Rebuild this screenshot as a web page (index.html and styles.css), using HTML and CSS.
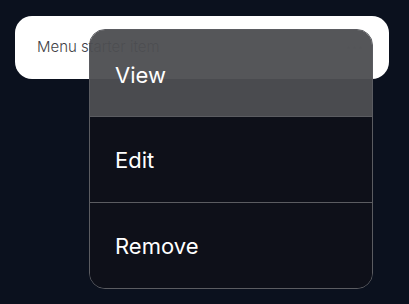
FILE: index.html
```html
<!DOCTYPE html>
<html lang="en">
<head>
    <meta charset="UTF-8">
    <meta name="viewport" content="width=device-width, initial-scale=1.0">
    <title>Menu</title>
    <link rel="stylesheet" href="styles.css">
</head>
<body>
    <div class="page">
        <div class="card">
            <span class="card-label">Menu starter item</span>
            <span class="dots">
                <i></i><i></i><i></i>
            </span>
        </div>

        <ul class="menu">
            <li class="menu-item active">View</li>
            <li class="menu-item">Edit</li>
            <li class="menu-item">Remove</li>
        </ul>
    </div>
</body>
</html>
```

FILE: styles.css
```css
* {
    margin: 0;
    padding: 0;
    box-sizing: border-box;
}

body {
    font-family: 'Inter', 'Noto Sans', sans-serif;
    background: #0b111e;
    min-height: 100vh;
}

.page {
    position: relative;
    padding: 16px 20px 0 15px;
}

.card {
    height: 63px;
    background: #ffffff;
    border-radius: 17px;
    display: flex;
    align-items: center;
    justify-content: space-between;
    padding: 0 27px 2px 22px;
}

.card-label {
    font-size: 15px;
    font-weight: 300;
    color: #3f3f46;
}

.dots {
    display: flex;
    gap: 3px;
    padding-top: 2px;
}

.dots i {
    width: 3px;
    height: 3px;
    border-radius: 50%;
    background: #d4d4d8;
}

.menu {
    position: absolute;
    left: 89px;
    top: 29px;
    width: 284px;
    list-style: none;
    border: 1px solid #5b5c61;
    border-radius: 16px;
    overflow: hidden;
}

.menu-item {
    height: 86px;
    display: flex;
    align-items: center;
    padding: 0 0 0 25px;
    font-size: 22px;
    color: #ffffff;
    background: #0e1019;
    border-top: 1px solid #5b5c61;
}

.menu-item:first-child {
    border-top: none;
    height: 86px;
    padding-top: 3px;
}

.menu-item.active {
    background: rgba(77, 78, 82, 0.955);
}
```
